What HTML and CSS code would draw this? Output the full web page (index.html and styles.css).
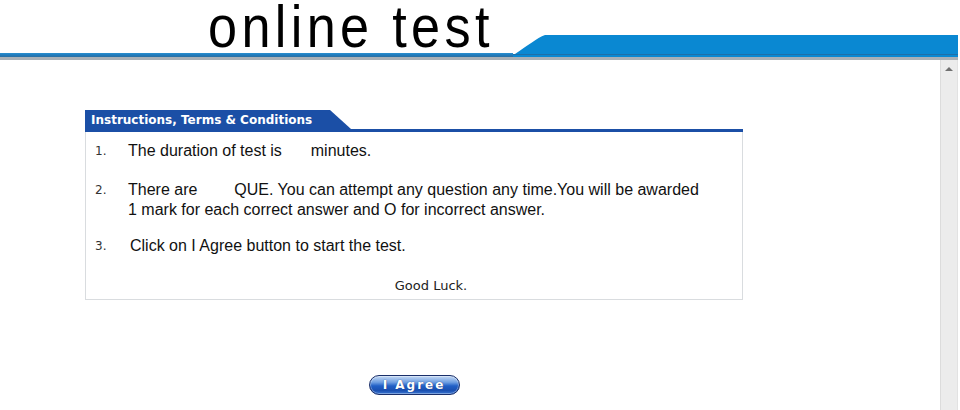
FILE: index.html
```html
<!DOCTYPE html>
<html>
<head>
<meta charset="utf-8">
<title>online test</title>
<link rel="stylesheet" href="styles.css">
</head>
<body>
<header class="top">
  <div class="brand">
    <h1 class="title">online test</h1>
  </div>
  <div class="band">
    <svg class="band-svg" viewBox="0 0 445 57" preserveAspectRatio="none" width="445" height="57">
      <path d="M0 54 L2 54 C14 46 24 38 32 35 L445 35 L445 57 L0 57 Z" fill="#0a88d2"/>
      <path d="M0 54.5 L445 54.5" stroke="#1e6fa8" stroke-width="1"/>
    </svg>
  </div>
</header>
<div class="page">
  <main class="content">
    <section class="panel">
      <div class="tab-row">
        <div class="tab">Instructions, Terms &amp; Conditions</div>
      </div>
      <div class="box">
        <ol class="rules">
          <li class="rule r1">
            <span class="num">1.</span>
            <p class="txt">The duration of test is <span class="blank b1"></span> minutes.</p>
          </li>
          <li class="rule r2">
            <span class="num">2.</span>
            <p class="txt">There are <span class="blank b2"></span> QUE. You can attempt any question any time.You will be awarded 1 mark for each correct answer and O for incorrect answer.</p>
          </li>
          <li class="rule r3">
            <span class="num">3.</span>
            <p class="txt">Click on I Agree button to start the test.</p>
          </li>
        </ol>
        <p class="luck">Good Luck.</p>
      </div>
    </section>
    <div class="actions">
      <button class="agree" type="button">I Agree</button>
    </div>
  </main>
  <aside class="scroll">
    <span class="arrow"></span>
  </aside>
</div>
</body>
</html>
```

FILE: styles.css
```css
html, body {
  margin: 0;
  padding: 0;
  background: #ffffff;
  width: 960px;
  height: 410px;
  overflow: hidden;
}

.top {
  display: flex;
  height: 60px;
}

.brand {
  flex: 0 0 513px;
  min-width: 0;
  height: 60px;
  box-sizing: border-box;
  border-bottom: 3px solid #a9b0b6;
}

.brand::after {
  content: "";
  display: block;
  height: 4px;
  background: linear-gradient(#2a8fd0, #1f7bbd 50%, #2d6fa0);
}

.title {
  margin: 0;
  padding-left: 208px;
  height: 53px;
  font-family: "Liberation Sans", Arial, sans-serif;
  font-weight: normal;
  font-size: 60px;
  line-height: 53px;
  letter-spacing: 5px;
  color: #000;
  white-space: nowrap;
  transform: scaleX(0.87);
  transform-origin: 208px 0;
}

.band {
  flex: 0 0 445px;
  min-width: 0;
  height: 60px;
  box-sizing: border-box;
  border-bottom: 3px solid #a9b0b6;
}

.band-svg {
  display: block;
  width: 445px;
  height: 57px;
}

.page {
  display: flex;
  height: 350px;
}

.content {
  flex: 0 0 940px;
  display: flex;
  flex-direction: column;
}

.panel {
  margin: 50px 0 0 85px;
  width: 658px;
}

.tab-row {
  height: 19px;
  border-bottom: 3px solid #1b4fa6;
}

.tab {
  width: 266px;
  height: 19px;
  box-sizing: border-box;
  background: #1b4fa6;
  clip-path: polygon(0 0, 245px 0, 266px 19px, 0 19px);
  color: #fff;
  font-family: "DejaVu Sans", Verdana, sans-serif;
  font-weight: bold;
  font-size: 12px;
  line-height: 21px;
  padding-left: 6px;
  white-space: nowrap;
}

.box {
  border: 1px solid #d9dcdf;
  border-top: 0;
  height: 168px;
  box-sizing: border-box;
}

.rules {
  list-style: none;
  margin: 0;
  padding: 9px 0 0 0;
}

.rule {
  display: flex;
  align-items: flex-start;
}

.r1 { margin-bottom: 19px; }
.r2 { margin-bottom: 16px; }
.r3 { margin-bottom: 0; }

.num {
  flex: 0 0 42px;
  box-sizing: border-box;
  padding-left: 9px;
  font-family: "DejaVu Sans", Verdana, sans-serif;
  font-size: 12px;
  line-height: 20px;
  color: #333;
}

.txt {
  margin: 0;
  width: 576px;
  font-family: "Liberation Sans", Arial, sans-serif;
  font-size: 16px;
  line-height: 20px;
  color: #111;
}

.r3 .txt {
  padding-left: 2px;
}

.blank {
  display: inline-block;
  height: 1px;
}

.b1 { width: 20px; }
.b2 { width: 28px; }

.luck {
  margin: 22px 0 0 0;
  text-align: center;
  font-family: "DejaVu Sans", Verdana, sans-serif;
  font-size: 13px;
  line-height: 16px;
  color: #222;
  padding-left: 34px;
}

.actions {
  display: flex;
  justify-content: center;
  margin-top: 75px;
  padding-left: 85px;
  width: 658px;
}

.agree {
  width: 91px;
  height: 20px;
  padding: 0;
  border: 1px solid #1a2f6a;
  border-radius: 10px;
  background: linear-gradient(#c6daf4 0%, #6f9fe2 35%, #2160c6 55%, #1a4fb0 80%, #3a75d2 100%);
  box-shadow: inset 0 0 0 1px rgba(255,255,255,0.35);
  color: #fff;
  font-family: "DejaVu Sans", Verdana, sans-serif;
  font-weight: bold;
  font-size: 12px;
  letter-spacing: 2px;
  line-height: 18px;
  text-shadow: 0 0 1px #1a2f6a;
  cursor: pointer;
}

.scroll {
  flex: 0 0 18px;
  height: 350px;
  background: #ececec;
  border-left: 1px solid #dcdcdc;
  border-right: 1px solid #e2e2e2;
  display: flex;
  justify-content: center;
  box-sizing: border-box;
}

.arrow {
  display: block;
  width: 0;
  height: 0;
  margin-top: 7px;
  border-left: 4px solid transparent;
  border-right: 4px solid transparent;
  border-bottom: 4px solid #707070;
}
```
